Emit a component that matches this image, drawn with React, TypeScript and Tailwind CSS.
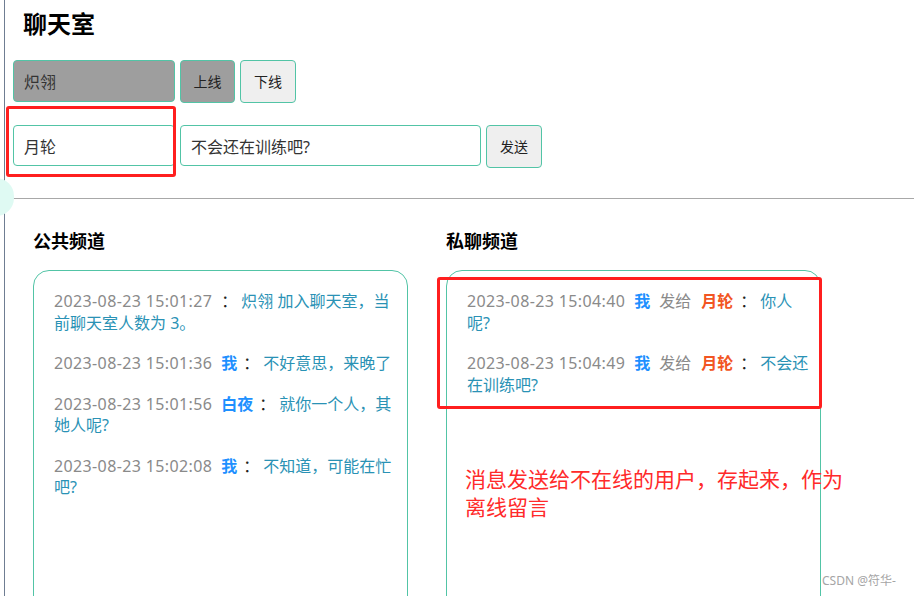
import React from "react";

type Msg = {
  time: string;
  from?: string;
  to?: string;
  text: string;
};

const publicMsgs: Msg[] = [
  { time: "2023-08-23 15:01:27", text: "炽翎 加入聊天室，当前聊天室人数为 3。" },
  { time: "2023-08-23 15:01:36", from: "我", text: "不好意思，来晚了" },
  { time: "2023-08-23 15:01:56", from: "白夜", text: "就你一个人，其她人呢?" },
  { time: "2023-08-23 15:02:08", from: "我", text: "不知道，可能在忙吧?" },
];

const privateMsgs: Msg[] = [
  { time: "2023-08-23 15:04:40", from: "我", to: "月轮", text: "你人呢?" },
  { time: "2023-08-23 15:04:49", from: "我", to: "月轮", text: "不会还在训练吧?" },
];

function MsgRow({ m }: { m: Msg }) {
  return (
    <div className="mb-[19px] text-[16px] leading-[21.5px]">
      <span className="text-[#8a8a8a] mr-[9px] tracking-[0.37px]">{m.time}</span>
      {m.from && (
        <span className={m.to ? "text-[#1e90ff] font-bold mr-[9px]" : "text-[#1e90ff] font-bold mr-[6px]"}>
          {m.from}
        </span>
      )}
      {m.to && (
        <>
          <span className="text-[#8a8a8a] mr-[10px]">发给</span>
          <span className="text-[#f25522] font-bold mr-[7px]">{m.to}</span>
        </>
      )}
      <span className="text-[#222] mr-[4px]">：</span>
      <span className="text-[#2a92b5]">{m.text}</span>
    </div>
  );
}

function Channel({ title, msgs }: { title: string; msgs: Msg[] }) {
  return (
    <div className="w-[375px] shrink-0">
      <h2 className="text-[18px] leading-[27px] font-bold text-black">{title}</h2>
      <div className="mt-[15px] h-[360px] border border-[#52c4a6] rounded-[16px] pt-[20px] pl-[20px] pr-[9px]">
        {msgs.map((m, i) => (
          <MsgRow key={i} m={m} />
        ))}
      </div>
    </div>
  );
}

export default function App() {
  return (
    <div
      className="relative w-[914px] h-[596px] overflow-hidden bg-white text-[#333]"
      style={{ fontFamily: '"Noto Sans", "Noto Sans CJK SC", sans-serif' }}
    >
      <div className="ml-[4px] h-full border-l border-[#6f7d92]">
        <div className="pl-[8px] pt-[8px]">
          <h1 className="pl-[10px] text-[24px] leading-[32px] font-bold text-black">聊天室</h1>
          <div className="mt-[20px] flex items-start gap-[5px]">
            <input
              readOnly
              value="炽翎"
              className="w-[162px] h-[42px] px-[10px] text-[16px] bg-[#9e9e9e] text-[#333] border border-[#52c4a6] rounded-[4px] outline-none"
            />
            <button className="w-[55px] h-[43px] text-[14px] bg-[#9e9e9e] text-[#222] border border-[#52c4a6] rounded-[4px]">
              上线
            </button>
            <button className="w-[56px] h-[43px] text-[14px] bg-[#efefef] text-[#222] border border-[#52c4a6] rounded-[4px]">
              下线
            </button>
          </div>
          <div className="mt-[22px] flex items-start gap-[5px]">
            <input
              readOnly
              value="月轮"
              className="w-[162px] h-[41px] px-[10px] text-[16px] bg-white text-[#333] border border-[#52c4a6] rounded-[4px] outline-none"
            />
            <input
              readOnly
              value="不会还在训练吧?"
              className="w-[301px] h-[41px] px-[10px] text-[16px] bg-white text-[#333] border border-[#52c4a6] rounded-[4px] outline-none"
            />
            <button className="w-[56px] h-[43px] text-[14px] bg-[#efefef] text-[#222] border border-[#52c4a6] rounded-[4px]">
              发送
            </button>
          </div>
        </div>
        <div className="mt-[30px] border-t border-[#a8a8a8]" />
        <div className="pl-[28px] pt-[29px] flex gap-[38px]">
          <Channel title="公共频道" msgs={publicMsgs} />
          <Channel title="私聊频道" msgs={privateMsgs} />
        </div>
      </div>

      {/* floating widget at left edge */}
      <div className="absolute left-[-22px] top-[178px] w-[36px] h-[38px] rounded-full bg-[#dffaf3]" />

      {/* annotations */}
      <div className="absolute left-[6px] top-[106px] w-[170px] h-[71px] border-[3px] border-[#ff1f1f] rounded-[3px]" />
      <div className="absolute left-[437px] top-[277px] w-[385px] h-[132px] border-[3px] border-[#ff1f1f] rounded-[3px]" />
      <div className="absolute left-[465px] top-[465px] w-[380px] text-[21px] leading-[28px] text-[#ff2a2a]">
        消息发送给不在线的用户，存起来，作为离线留言
      </div>
      <div className="absolute left-[822px] top-[572px] text-[12px] text-[#a5a5a5]">CSDN @符华-</div>
    </div>
  );
}
